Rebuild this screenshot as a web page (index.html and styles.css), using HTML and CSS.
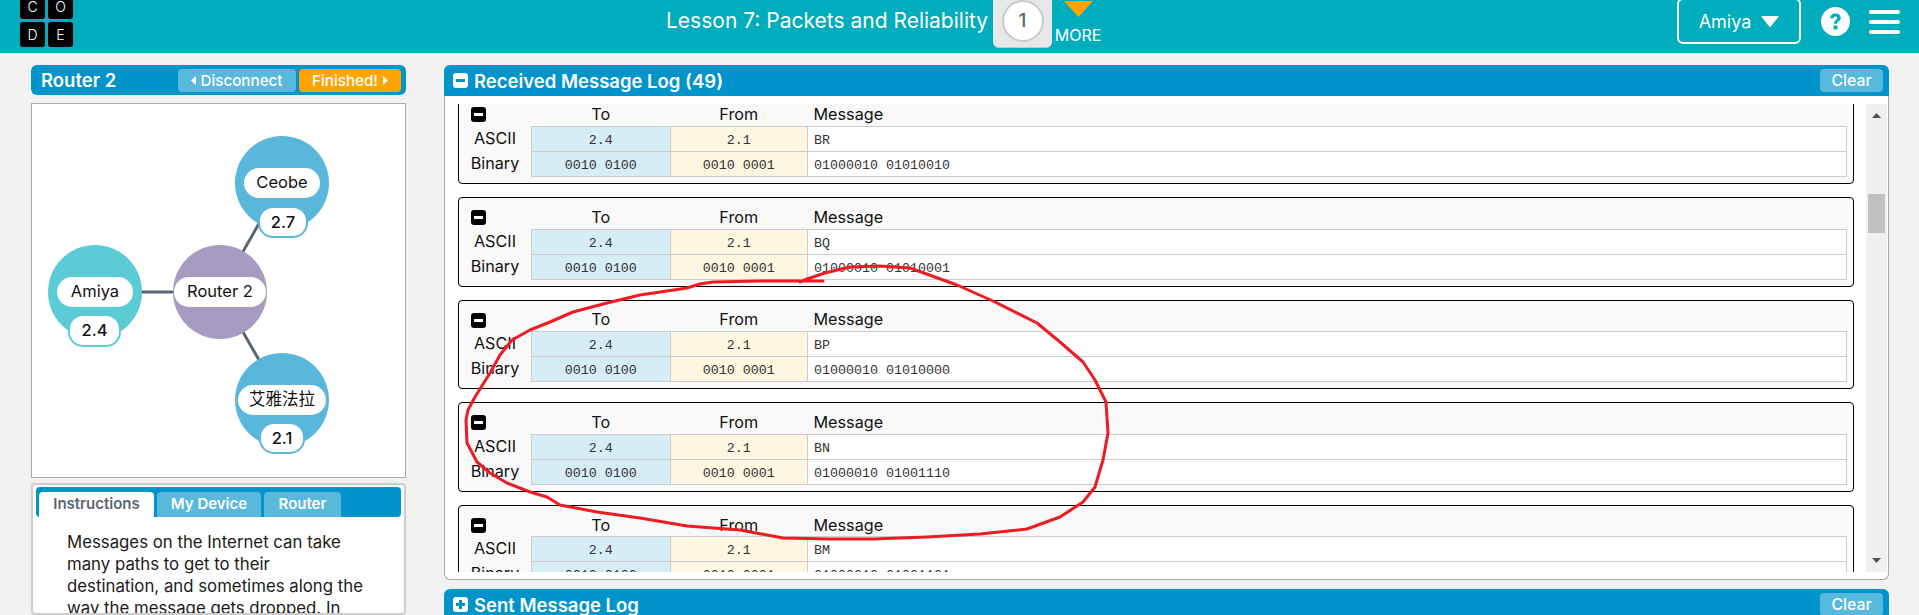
FILE: index.html
```html
<!DOCTYPE html>
<html lang="en">
<head>
<meta charset="utf-8">
<title>Lesson 7: Packets and Reliability</title>
<link rel="stylesheet" href="styles.css">
</head>
<body>
<header class="topbar">
  <div class="logo">
    <span class="tile">C</span><span class="tile">O</span><span class="tile">D</span><span class="tile">E</span>
  </div>
  <div class="lesson">
    <span class="lesson-title">Lesson 7: Packets and Reliability</span>
    <div class="puzzle"><span class="puzzle-dot">1</span></div>
    <div class="more">
      <svg class="more-arrow" width="29" height="16" viewBox="0 0 29 16"><path d="M0 0H29L14.500 16Z" fill="#ffa400"/></svg>
      <span>MORE</span>
    </div>
  </div>
  <div class="top-right">
    <div class="user"><span>Amiya</span><svg width="18" height="11" viewBox="0 0 18 11"><path d="M1 0H17Q18 0 17.400 1L9.800 10.400Q9 11 8.200 10.400L.6 1Q0 0 1 0Z" fill="#fff"/></svg></div>
    <svg class="help" width="29" height="29" viewBox="0 0 29 29"><circle cx="14.500" cy="14.500" r="14.500" fill="#fff"/><path d="M9.300 11.200C9.300 8.300 11.500 6.500 14.500 6.500C17.500 6.500 19.800 8.300 19.800 11C19.800 13.800 16.400 14.200 16 16.800H13C13 13.200 16.300 12.800 16.300 11C16.300 10 15.500 9.500 14.500 9.500C13.300 9.500 12.700 10.200 12.600 11.200Z" fill="#00adbc"/><rect x="12.500" y="18.500" width="4" height="4" fill="#00adbc"/></svg>
    <div class="burger"><i></i><i></i><i></i></div>
  </div>
</header>

<main class="layout">
  <section class="left">
    <div class="bar router-bar">
      <span class="bar-title">Router 2</span>
      <div class="bar-btns">
        <span class="btn btn-blue btn-disconnect"><svg width="5" height="9" viewBox="0 0 5 9"><path d="M5 0V9L0 4.500Z" fill="#fff"/></svg>Disconnect</span>
        <span class="btn btn-orange"><span>Finished!</span><svg width="5" height="9" viewBox="0 0 5 9"><path d="M0 0V9L5 4.500Z" fill="#fff"/></svg></span>
      </div>
    </div>
    <div class="network">
      <svg class="links" width="373" height="373" viewBox="0 0 373 373">
        <path d="M188 188L250 79M188 188L63 188M188 188L250 296" stroke="#5b6770" stroke-width="3" fill="none"/>
      </svg>
      <div class="node node-router"><span class="node-name">Router 2</span></div>
      <div class="node node-amiya"><span class="node-name">Amiya</span><span class="node-addr">2.4</span></div>
      <div class="node node-ceobe"><span class="node-name">Ceobe</span><span class="node-addr">2.7</span></div>
      <div class="node node-eyja"><span class="node-name">艾雅法拉</span><span class="node-addr">2.1</span></div>
    </div>
    <div class="instructions">
      <div class="tabs">
        <span class="tab tab-active">Instructions</span>
        <span class="tab tab-device">My Device</span>
        <span class="tab tab-router">Router</span>
      </div>
      <p class="instr-text">Messages on the Internet can take<br>many paths to get to their<br>destination, and sometimes along the<br>way the message gets dropped. In<br>this lesson you will find out what happens.</p>
    </div>
  </section>

  <section class="right">
    <div class="bar log-bar">
      <svg class="toggle" width="15" height="15" viewBox="0 0 15 15"><rect width="15" height="15" rx="3" fill="#fff"/><rect x="3" y="6" width="9" height="3" fill="#0094ca"/></svg>
      <span class="bar-title">Received Message Log (49)</span>
      <span class="btn btn-blue btn-clear">Clear</span>
    </div>
    <div class="log-body">
      <div class="log-clip">
        <div class="log-list">
          <article class="card">
            <svg class="card-toggle" width="15" height="15" viewBox="0 0 15 15"><rect width="15" height="15" rx="3" fill="#000"/><rect x="3" y="6" width="9" height="3" fill="#fff"/></svg>
            <table class="packet">
              <tr class="head"><th></th><th>To</th><th>From</th><th class="msg">Message</th></tr>
              <tr><th>ASCII</th><td class="to">2.4</td><td class="from">2.1</td><td class="msg">BR</td></tr>
              <tr><th>Binary</th><td class="to">0010 0100</td><td class="from">0010 0001</td><td class="msg">01000010 01010010</td></tr>
            </table>
          </article>
          <article class="card">
            <svg class="card-toggle" width="15" height="15" viewBox="0 0 15 15"><rect width="15" height="15" rx="3" fill="#000"/><rect x="3" y="6" width="9" height="3" fill="#fff"/></svg>
            <table class="packet">
              <tr class="head"><th></th><th>To</th><th>From</th><th class="msg">Message</th></tr>
              <tr><th>ASCII</th><td class="to">2.4</td><td class="from">2.1</td><td class="msg">BQ</td></tr>
              <tr><th>Binary</th><td class="to">0010 0100</td><td class="from">0010 0001</td><td class="msg">01000010 01010001</td></tr>
            </table>
          </article>
          <article class="card">
            <svg class="card-toggle" width="15" height="15" viewBox="0 0 15 15"><rect width="15" height="15" rx="3" fill="#000"/><rect x="3" y="6" width="9" height="3" fill="#fff"/></svg>
            <table class="packet">
              <tr class="head"><th></th><th>To</th><th>From</th><th class="msg">Message</th></tr>
              <tr><th>ASCII</th><td class="to">2.4</td><td class="from">2.1</td><td class="msg">BP</td></tr>
              <tr><th>Binary</th><td class="to">0010 0100</td><td class="from">0010 0001</td><td class="msg">01000010 01010000</td></tr>
            </table>
          </article>
          <article class="card">
            <svg class="card-toggle" width="15" height="15" viewBox="0 0 15 15"><rect width="15" height="15" rx="3" fill="#000"/><rect x="3" y="6" width="9" height="3" fill="#fff"/></svg>
            <table class="packet">
              <tr class="head"><th></th><th>To</th><th>From</th><th class="msg">Message</th></tr>
              <tr><th>ASCII</th><td class="to">2.4</td><td class="from">2.1</td><td class="msg">BN</td></tr>
              <tr><th>Binary</th><td class="to">0010 0100</td><td class="from">0010 0001</td><td class="msg">01000010 01001110</td></tr>
            </table>
          </article>
          <article class="card">
            <svg class="card-toggle" width="15" height="15" viewBox="0 0 15 15"><rect width="15" height="15" rx="3" fill="#000"/><rect x="3" y="6" width="9" height="3" fill="#fff"/></svg>
            <table class="packet">
              <tr class="head"><th></th><th>To</th><th>From</th><th class="msg">Message</th></tr>
              <tr><th>ASCII</th><td class="to">2.4</td><td class="from">2.1</td><td class="msg">BM</td></tr>
              <tr><th>Binary</th><td class="to">0010 0100</td><td class="from">0010 0001</td><td class="msg">01000010 01001101</td></tr>
            </table>
          </article>
        </div>
      </div>
      <div class="scrollbar">
        <svg width="9" height="5" viewBox="0 0 9 5"><path d="M4.500 0L9 5H0Z" fill="#505050"/></svg>
        <div class="thumb"></div>
        <svg class="arrow-down" width="9" height="5" viewBox="0 0 9 5"><path d="M0 0H9L4.500 5Z" fill="#505050"/></svg>
      </div>
    </div>
    <div class="bar log-bar sent-bar">
      <svg class="toggle" width="15" height="15" viewBox="0 0 15 15"><rect width="15" height="15" rx="3" fill="#fff"/><path d="M3 6H6V3H9V6H12V9H9V12H6V9H3Z" fill="#0094ca"/></svg>
      <span class="bar-title">Sent Message Log</span>
      <span class="btn btn-blue btn-clear">Clear</span>
    </div>
  </section>
</main>

<svg class="scribble" width="1919" height="615" viewBox="0 0 1919 615">
  <path d="M823 281L803 281L760 281L713 282L700 284L687 288L640 295L607 303L573 312L550 322L530 330L512 340L500 355L490 373L475 397L468 410L466 420L467 443L477 462L490 473L507 483L530 492L547 497L560 505L597 512L640 518L687 526L740 530L783 538L830 539L873 539L927 537L980 534L1027 529L1060 517L1083 502L1095 487L1103 460L1108 433L1106 402L1095 380L1083 362L1060 342L1037 323L993 301L957 285L910 268L880 266L850 267L825 273L807 279L800 282" fill="none" stroke="#ed1c24" stroke-width="3" stroke-linejoin="round" stroke-linecap="round"/>
</svg>
</body>
</html>
```

FILE: styles.css
```css
* { box-sizing: border-box; }
html, body { margin: 0; height: 615px; overflow: hidden; }
body {
  background: #f2f2f2;
  font-family: Inter, "Noto Sans CJK SC", sans-serif;
  color: #111;
  position: relative;
}

/* top bar */
.topbar {
  height: 53px;
  background: #00adbc;
  color: #fff;
  display: flex;
  align-items: flex-start;
  padding: 0 19px 0 20px;
  overflow: hidden;
}
.logo {
  width: 53px;
  margin-top: -6px;
  display: grid;
  grid-template-columns: 25px 25px;
  gap: 3px;
  flex: none;
}
.tile {
  height: 25px;
  background: #000;
  border-radius: 3px;
  font-size: 14px;
  font-weight: 300;
  line-height: 25px;
  text-align: center;
}
.lesson {
  display: flex;
  align-items: flex-start;
  margin-left: 593px;
}
.lesson-title { font-size: 21px; line-height: 42px; width: 327px; white-space: nowrap; }
.puzzle {
  width: 59px;
  height: 48px;
  background: #e7e8ea;
  border-bottom: 1px solid #c8c8c8;
  border-radius: 0 0 6px 6px;
  display: flex;
  justify-content: center;
}
.puzzle-dot {
  width: 42px;
  height: 42px;
  border-radius: 50%;
  background: #fff;
  border: 2px solid #c8c8c8;
  color: #5b6770;
  font-size: 19px;
  font-weight: 500;
  line-height: 38px;
  text-align: center;
}
.more {
  width: 50px;
  margin-left: 1px;
  display: flex;
  flex-direction: column;
  align-items: center;
  font-size: 16px;
  line-height: 18px;
}
.more-arrow { margin: 1px 0 9px; }
.top-right { margin-left: auto; display: flex; align-items: flex-start; }
.user {
  width: 124px;
  height: 46px;
  margin-top: -2px;
  border: 2px solid #fff;
  border-radius: 6px;
  display: flex;
  align-items: center;
  justify-content: center;
  gap: 10px;
  font-size: 18px;
}
.help { margin: 7px 0 0 20px; }
.burger { width: 31px; margin: 10px 0 0 19px; display: flex; flex-direction: column; gap: 6px; }
.burger i { height: 4px; background: #fff; border-radius: 2px; }

/* layout */
.layout {
  display: flex;
  gap: 38px;
  padding: 12px 30px 0 31px;
}
.left { width: 375px; flex: none; display: flex; flex-direction: column; height: 550px; }
.right { width: 1445px; flex: none; }

.bar {
  background: #0094ca;
  color: #fff;
  display: flex;
  align-items: center;
}
.bar-title { font-size: 18.500px; font-weight: 600; white-space: nowrap; }
.router-bar { height: 30px; border-radius: 6px; padding: 0 5px 0 10px; justify-content: space-between; }
.bar-btns { display: flex; gap: 3px; }
.btn {
  height: 23px;
  border-radius: 4px;
  color: #fff;
  font-size: 15.200px;
  font-weight: 500;
  display: flex;
  align-items: center;
  justify-content: center;
  white-space: nowrap;
}
.btn-blue { background: #59b9dc; }
.btn-orange { background: #ffa400; width: 102px; gap: 5px; }
.btn-disconnect { width: 118px; gap: 4px; }
.btn-clear { width: 63px; margin-left: auto; font-size: 15.800px; }

/* network */
.network {
  position: relative;
  margin-top: 8px;
  height: 375px;
  background: #fff;
  border: 1px solid #aaa;
}
.links { position: absolute; left: 0; top: 0; }
.node {
  position: absolute;
  width: 94px;
  height: 94px;
  border-radius: 50%;
  font-size: 16.500px;
}
.node-router { left: 141px; top: 141px; background: #a79bc1; }
.node-amiya { left: 16px; top: 141px; background: #5bcbd5; --node: #5bcbd5; }
.node-ceobe { left: 203px; top: 32px; background: #5ab7dc; --node: #5ab7dc; }
.node-eyja { left: 203px; top: 249px; background: #5ab7dc; --node: #5ab7dc; }
.node-name {
  position: absolute;
  left: 9px;
  top: 32px;
  width: 76px;
  height: 30px;
  border-radius: 15px;
  background: #fff;
  text-align: center;
  line-height: 29px;
  white-space: nowrap;
}
.node-router .node-name { left: 1px; width: 92px; }
.node-eyja .node-name { left: 3px; width: 88px; }
.node-addr {
  position: absolute;
  left: 20px;
  top: 69px;
  width: 53px;
  height: 33px;
  border-radius: 15px;
  background: #fff;
  border: 2px solid var(--node);
  text-align: center;
  font-weight: 500;
  line-height: 28px;
}
.node-ceobe .node-addr { left: 23px; top: 70px; width: 50px; height: 32px; }
.node-eyja .node-addr { left: 24px; width: 46px; height: 32px; }

/* instructions */
.instructions {
  margin-top: 5px;
  flex: 1;
  min-height: 0;
  background: #fff;
  border: 2px solid #ccc;
  border-radius: 4px;
  padding: 2px 3px;
  overflow: hidden;
}
.tabs {
  height: 30px;
  background: #0094ca;
  border-radius: 4px;
  display: flex;
  align-items: flex-end;
  gap: 3px;
  padding-left: 3px;
}
.tab {
  height: 25px;
  background: #59b9dc;
  color: #fff;
  border-radius: 4px 4px 0 0;
  font-size: 15px;
  font-weight: 600;
  line-height: 24px;
  text-align: center;
}
.tab-active { background: #fff; color: #5b6770; width: 115px; }
.tab-device { width: 104px; }
.tab-router { width: 77px; }
.instr-text {
  margin: 14px 0 0 31px;
  white-space: nowrap;
  font-size: 16.800px;
  line-height: 22px;
  color: #1a1a1a;
}

/* message log */
.log-bar { height: 31px; border-radius: 6px 6px 0 0; padding: 0 6px 0 9px; }
.toggle { margin-right: 6px; flex: none; }
.log-body {
  height: 484px;
  background: #fff;
  border: 1px solid #aaa;
  border-top: 0;
  border-radius: 0 0 6px 6px;
  padding-top: 8px;
  display: flex;
  align-items: flex-start;
}
.log-clip { flex: 1; height: 468px; overflow: hidden; padding: 0 12.500px 0 13px; }
.log-list { margin-top: -9.670px; }
.card {
  position: relative;
  height: 89.670px;
  margin-bottom: 13px;
  background: #f9f9f9;
  border: 1px solid #000;
  border-radius: 4px;
}
.card-toggle { position: absolute; left: 12px; top: 12px; }
.packet {
  width: 1388px;
  table-layout: fixed;
  border-collapse: collapse;
  font-size: 16.200px;
}
.packet th { font-weight: 400; padding: 0 0 2px; color: #111; }
.packet tr { height: 25px; }
.packet tr.head { height: 31px; }
.packet tr.head th { padding: 7px 0 0; }
.packet th:first-child { width: 72.500px; }
.packet td {
  padding: 3px 0 0;
  border: 1px solid #ccc;
  font-family: "Liberation Mono", monospace;
  font-size: 13.330px;
  text-align: center;
  color: #333;
}
.packet th:nth-child(2) { width: 138.500px; }
.packet th:nth-child(3) { width: 137.500px; }
.packet .to { background: #d7edf6; }
.packet .from { background: #fef6e0; }
.packet td.msg { text-align: left; padding-left: 6px; background: #fff; }
.packet tr.head th.msg { text-align: left; padding-left: 6px; background: none; }

.scrollbar {
  width: 21px;
  height: 468px;
  margin-right: 1px;
  background: #f0f0f0;
  display: flex;
  flex-direction: column;
  align-items: center;
  padding-top: 9px;
}
.thumb { width: 17px; height: 39px; margin-top: 76px; background: #c1c1c1; }
.arrow-down { margin-top: auto; margin-bottom: 9px; }

.sent-bar { margin-top: 9px; }

.scribble { position: absolute; left: 0; top: 0; pointer-events: none; }
```
